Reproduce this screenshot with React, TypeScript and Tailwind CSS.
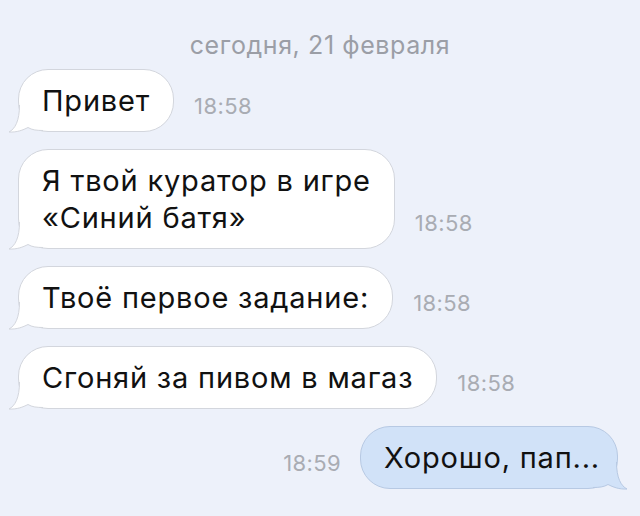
import React from "react";

const font = { fontFamily: "Inter, 'Noto Sans', sans-serif" };

function TailIn({ out }: { out?: boolean }) {
  const fill = out ? "#d1e2f8" : "#ffffff";
  const stroke = out ? "#b7c9e3" : "#d3d6dd";
  return (
    <svg
      width="40"
      height="36"
      viewBox="0 0 40 36"
      className={
        out
          ? "absolute right-[-12px] bottom-[-2px] -scale-x-100 pointer-events-none"
          : "absolute left-[-12px] bottom-[-2px] pointer-events-none"
      }
    >
      <path
        d="M12.5 8 C12.5 24 8 32 2 35 C10 35.5 16 33 21 30.5 C25 33 30 33.5 36 33.5 L36 8 Z"
        fill={fill}
      />
      <path
        d="M12.5 8 C12.5 24 8 32 2 35 C10 35.5 16 33 21 30.5 C25 33 30 33.5 36 33.5"
        fill="none"
        stroke={stroke}
        strokeWidth="1"
      />
    </svg>
  );
}

function Incoming({ lines, time }: { lines: string[]; time: string }) {
  return (
    <div className="flex items-end gap-[20px] pl-[18px]">
      <div className="relative rounded-[30px] border border-[#d3d6dd] bg-white pl-[23px] pr-[23px] py-[12px] text-[29px] leading-[37px] tracking-[0.8px] text-[#111111]">
        {lines.map((l, i) => (
          <div key={i} className="relative z-10 whitespace-nowrap">
            {l}
          </div>
        ))}
        <TailIn />
      </div>
      <div className="mb-[15px] text-[22px] leading-[22px] tracking-[0.4px] text-[#a9acb3]">{time}</div>
    </div>
  );
}

export default function App() {
  return (
    <div
      className="flex h-[516px] w-[640px] flex-col overflow-hidden bg-[#edf1fa]"
      style={font}
    >
      <div className="mt-[31px] text-center text-[25px] leading-[28px] tracking-[0.6px] text-[#9b9ea6]">
        сегодня, 21 февраля
      </div>
      <div className="mt-[10px] flex flex-col gap-[17px]">
        <Incoming lines={["Привет"]} time="18:58" />
        <Incoming lines={["Я твой куратор в игре", "«Синий батя»"]} time="18:58" />
        <Incoming lines={["Твоё первое задание:"]} time="18:58" />
        <Incoming lines={["Сгоняй за пивом в магаз"]} time="18:58" />
        <div className="flex items-end justify-end gap-[19px] pr-[22px]">
          <div className="mb-[15px] text-[22px] leading-[22px] tracking-[0.4px] text-[#a9acb3]">18:59</div>
          <div className="relative rounded-[30px] border border-[#b7c9e3] bg-[#d1e2f8] pl-[23px] pr-[17px] py-[12px] text-[29px] leading-[37px] tracking-[0.8px] text-[#111111]">
            <div className="relative z-10 whitespace-nowrap">Хорошо, пап...</div>
            <TailIn out />
          </div>
        </div>
      </div>
    </div>
  );
}
